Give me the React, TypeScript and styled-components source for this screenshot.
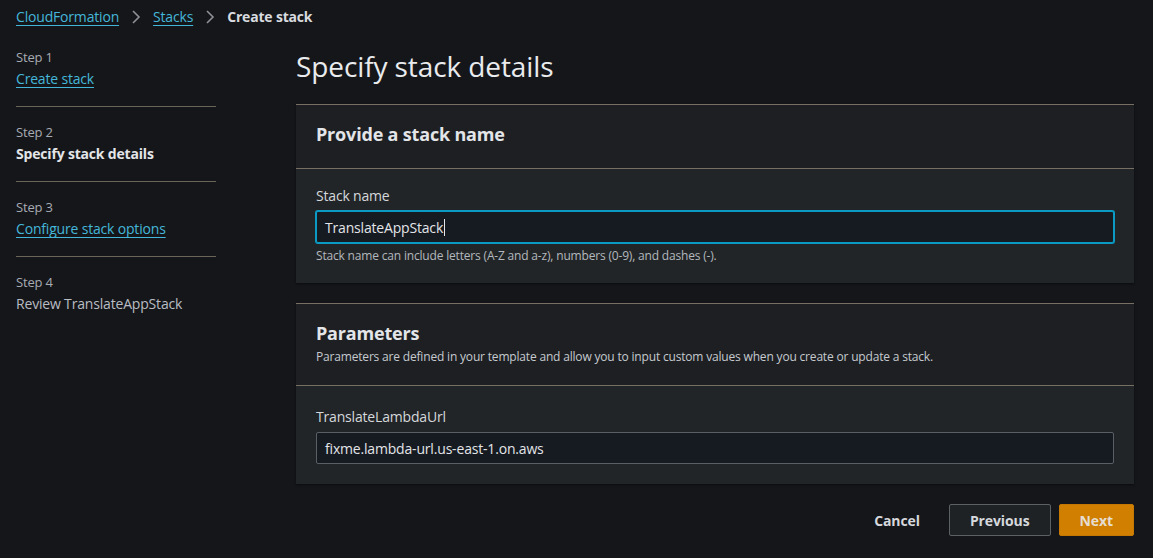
import React from "react";
import styled, { createGlobalStyle } from "styled-components";

const Global = createGlobalStyle`
  html, body { margin: 0; padding: 0; background: #15161a; }
  body { font-family: "Open Sans", "Noto Sans", sans-serif; color: #d1d5db; letter-spacing: -0.18px; }
  * { box-sizing: border-box; }
`;

const Page = styled.div`
  width: 1153px;
  height: 558px;
  background: #15161a;
  padding: 6px 19px 0 16px;
  overflow: hidden;
`;

const Breadcrumbs = styled.nav`
  display: flex;
  align-items: center;
  gap: 12px;
  height: 22px;
  font-size: 14px;
  line-height: 22px;
`;

const Link = styled.a`
  color: #44b6d9;
  text-decoration: underline;
  text-underline-offset: 3px;
  text-decoration-thickness: 1px;
  cursor: pointer;
`;

const Current = styled.span`
  font-weight: 700;
  color: #d8dbdf;
`;

const Chevron = () => (
  <svg width="10" height="16" viewBox="0 0 10 16" fill="none">
    <polyline points="2,2 8,8 2,14" stroke="#8d9096" strokeWidth="1.6" strokeLinejoin="miter" />
  </svg>
);

const Layout = styled.div`
  display: grid;
  grid-template-columns: 200px 1fr;
  column-gap: 80px;
  margin-top: 20px;
`;

const Sidebar = styled.ol`
  list-style: none;
  margin: 0;
  padding: 0;
`;

const StepItem = styled.li<{ $first?: boolean; $last?: boolean }>`
  display: flex;
  flex-direction: column;
  gap: 2px;
  padding: ${p => (p.$first ? "0" : "16px")} 0 16px;
  border-bottom: ${p => (p.$last ? "none" : "1px solid #6b6459")};
`;

const StepLabel = styled.span`
  font-size: 13px;
  line-height: 18px;
  color: #a7abb2;
`;

const StepTitle = styled.span<{ $bold?: boolean }>`
  font-size: 14px;
  line-height: 22px;
  color: ${p => (p.$bold ? "#e3e5e8" : "#b9bdc3")};
  font-weight: ${p => (p.$bold ? 700 : 400)};
`;

const StepLink = styled(Link)`
  font-size: 14px;
  line-height: 22px;
  align-self: flex-start;
`;

const Main = styled.main`
  display: flex;
  flex-direction: column;
`;

const Title = styled.h1`
  margin: 0 0 20px;
  font-size: 28px;
  line-height: 36px;
  font-weight: 400;
  color: #e9ebed;
  letter-spacing: -0.1px;
`;

const Panel = styled.section`
  background: #222527;
  border-top: 1px solid #776f63;
  box-shadow: 0 1px 2px rgba(0, 0, 0, 0.5);
  margin-bottom: 20px;
`;

const PanelHeader = styled.header<{ $pb: number }>`
  background: #1d1f23;
  padding: 17px 20px ${p => p.$pb}px;
  border-bottom: 1px solid #776f63;
`;

const PanelTitle = styled.h2`
  margin: 0;
  font-size: 18px;
  line-height: 24px;
  font-weight: 700;
  color: #e3e5e8;
`;

const PanelDesc = styled.p`
  margin: 4px 0 0;
  font-size: 12px;
  line-height: 16px;
  color: #c6cacf;
`;

const PanelBody = styled.div<{ $pt: number; $pb: number }>`
  padding: ${p => p.$pt}px 20px ${p => p.$pb}px;
  display: flex;
  flex-direction: column;
`;

const Label = styled.label`
  font-size: 14px;
  line-height: 22px;
  color: #d5d8dc;
  margin-bottom: 4px;
`;

const Field = styled.div<{ $focused?: boolean }>`
  height: 32px;
  display: flex;
  align-items: center;
  padding: 0 8px;
  background: #161a21;
  border: 1px solid ${p => (p.$focused ? "#0a9ac4" : "#5a5f66")};
  box-shadow: ${p => (p.$focused ? "0 0 0 1px #0a9ac4" : "none")};
  border-radius: 2px;
  font-size: 14px;
  color: #e3e5e8;
`;

const Caret = styled.span`
  display: inline-block;
  width: 1px;
  height: 17px;
  background: #e3e5e8;
  margin-left: 1px;
`;

const Hint = styled.div`
  margin-top: 5px;
  font-size: 12px;
  line-height: 16px;
  color: #b3b8be;
`;

const Actions = styled.div`
  display: flex;
  justify-content: flex-end;
  align-items: center;
  gap: 8px;
`;

const Button = styled.button<{ $variant: "link" | "normal" | "primary" }>`
  height: 32px;
  padding: 0 20px;
  font-family: inherit;
  font-size: 14px;
  font-weight: 700;
  letter-spacing: -0.1px;
  border-radius: 2px;
  cursor: pointer;
  color: ${p => (p.$variant === "primary" ? "#e6ddd0" : "#d5d8dc")};
  background: ${p =>
    p.$variant === "primary" ? "#d07f00" : p.$variant === "normal" ? "#1f2225" : "transparent"};
  border: 1px solid
    ${p => (p.$variant === "primary" ? "#c47800" : p.$variant === "normal" ? "#5d6166" : "transparent")};
`;

export default function App() {
  return (
    <>
      <Global />
      <Page>
        <Breadcrumbs>
          <Link>CloudFormation</Link>
          <Chevron />
          <Link>Stacks</Link>
          <Chevron />
          <Current>Create stack</Current>
        </Breadcrumbs>
        <Layout>
          <Sidebar>
            <StepItem $first>
              <StepLabel>Step 1</StepLabel>
              <StepLink>Create stack</StepLink>
            </StepItem>
            <StepItem>
              <StepLabel>Step 2</StepLabel>
              <StepTitle $bold>Specify stack details</StepTitle>
            </StepItem>
            <StepItem>
              <StepLabel>Step 3</StepLabel>
              <StepLink>Configure stack options</StepLink>
            </StepItem>
            <StepItem $last>
              <StepLabel>Step 4</StepLabel>
              <StepTitle>Review TranslateAppStack</StepTitle>
            </StepItem>
          </Sidebar>
          <Main>
            <Title>Specify stack details</Title>
            <Panel>
              <PanelHeader $pb={22}>
                <PanelTitle>Provide a stack name</PanelTitle>
              </PanelHeader>
              <PanelBody $pt={16} $pb={19}>
                <Label>Stack name</Label>
                <Field $focused>
                  TranslateAppStack
                  <Caret />
                </Field>
                <Hint>Stack name can include letters (A-Z and a-z), numbers (0-9), and dashes (-).</Hint>
              </PanelBody>
            </Panel>
            <Panel>
              <PanelHeader $pb={20}>
                <PanelTitle>Parameters</PanelTitle>
                <PanelDesc>
                  Parameters are defined in your template and allow you to input custom values when you create or
                  update a stack.
                </PanelDesc>
              </PanelHeader>
              <PanelBody $pt={20} $pb={20}>
                <Label>TranslateLambdaUrl</Label>
                <Field>fixme.lambda-url.us-east-1.on.aws</Field>
              </PanelBody>
            </Panel>
            <Actions>
              <Button $variant="link">Cancel</Button>
              <Button $variant="normal">Previous</Button>
              <Button $variant="primary">Next</Button>
            </Actions>
          </Main>
        </Layout>
      </Page>
    </>
  );
}
